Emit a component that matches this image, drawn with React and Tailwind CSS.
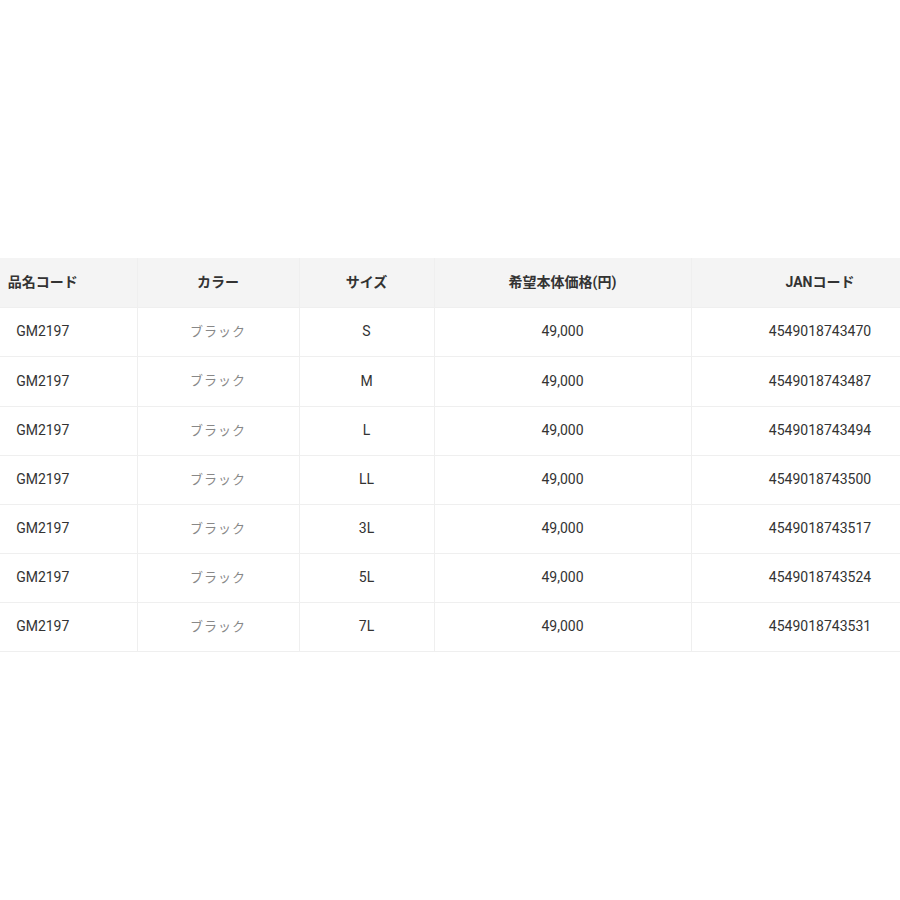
import React from 'react';

const SIZES = [
  { size: 'S', jan: '4549018743470' },
  { size: 'M', jan: '4549018743487' },
  { size: 'L', jan: '4549018743494' },
  { size: 'LL', jan: '4549018743500' },
  { size: '3L', jan: '4549018743517' },
  { size: '5L', jan: '4549018743524' },
  { size: '7L', jan: '4549018743531' },
];

const cell = 'border-b border-r border-[#efefef] text-center align-middle';

export default function App() {
  return (
    <div
      className="w-[900px] h-[900px] overflow-hidden bg-white pt-[258px]"
      style={{ fontFamily: 'Roboto, "Noto Sans CJK JP", sans-serif' }}
    >
      <div className="-ml-[51px] w-[1000px]">
        <table className="w-[1000px] table-fixed border-collapse text-[14px] text-[#333]">
          <colgroup>
            <col className="w-[188px]" />
            <col className="w-[162px]" />
            <col className="w-[135px]" />
            <col className="w-[257px]" />
            <col className="w-[258px]" />
          </colgroup>
          <thead>
            <tr className="h-[49px] bg-[#f4f4f4] font-bold">
              <th className={cell}>品名コード</th>
              <th className={cell}>カラー</th>
              <th className={cell}>サイズ</th>
              <th className={cell}>希望本体価格(円)</th>
              <th className={cell}>JANコード</th>
            </tr>
          </thead>
          <tbody>
            {SIZES.map((row, i) => (
              <tr key={row.size} className={i === 1 ? 'h-[50px]' : 'h-[49px]'}>
                <td className={cell}>GM2197</td>
                <td className={`${cell} text-[13px] text-[#888] tracking-[0.08em]`}>ブラック</td>
                <td className={cell}>{row.size}</td>
                <td className={cell}>49,000</td>
                <td className={cell}>{row.jan}</td>
              </tr>
            ))}
          </tbody>
        </table>
      </div>
    </div>
  );
}
